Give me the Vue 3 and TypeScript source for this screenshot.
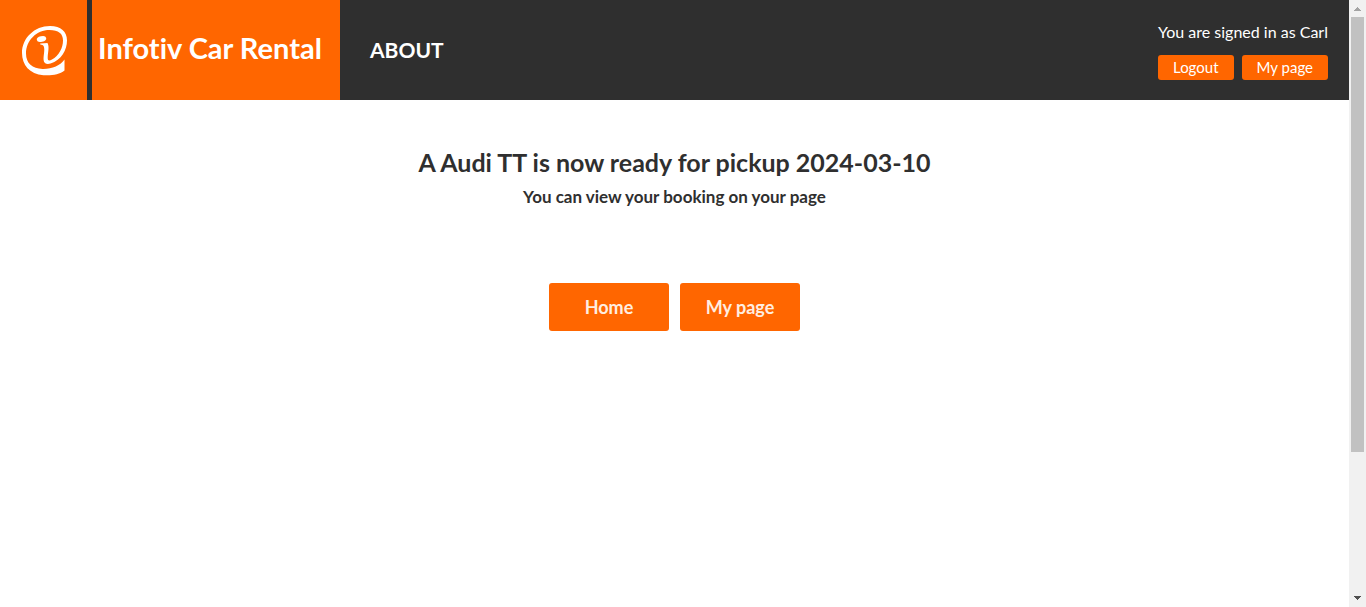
<script setup lang="ts">
import { ref } from 'vue'

const user = ref('Carl')
const car = ref('Audi TT')
const pickupDate = ref('2024-03-10')
</script>

<template>
  <div class="window">
    <div class="page">
      <header class="header">
        <a class="logo" href="#" aria-label="Infotiv home">
          <svg viewBox="-1.5 -1 48 52" width="48" height="52" aria-hidden="true">
            <path
              fill="#fff"
              fill-rule="evenodd"
              d="M43 34.500V45.500C38 49.500 30 50.800 22 50.200C8 49 .5 40 .5 28C.5 13 13 1 28.500 1C39.500 1 45.500 6.500 45.500 15.500C45.500 25 40 35 29 38.500C25.500 39.600 22.300 38.600 22.100 35C21.900 30 23.600 25 22.300 21.500C21.600 19.700 20.500 19.600 18.800 19.400L18.700 18.600L26 18C28 21.500 26.500 27 26.200 32C26 36 27.500 36.300 30.500 34.500C37.500 31 41.500 22.500 41.500 15.500C41.500 8.500 37 5 28 5C15 5 4.500 15.500 4.500 28.500C4.500 38.500 11 43.500 21 44C30 44.300 39 40.500 43 34.500Z"
            />
            <ellipse cx="20" cy="14" rx="4.800" ry="2.800" fill="#fff" transform="rotate(-12 20 14)" />
          </svg>
        </a>
        <div class="brand"><h1 class="title">Infotiv Car Rental</h1></div>
        <nav class="nav"><a class="about" href="#about">ABOUT</a></nav>
        <div class="account">
          <span class="signed-in">You are signed in as {{ user }}</span>
          <div class="account-buttons">
            <button class="small-button" type="button">Logout</button>
            <button class="small-button" type="button">My page</button>
          </div>
        </div>
      </header>
      <main class="main">
        <h2 class="confirm">A {{ car }} is now ready for pickup {{ pickupDate }}</h2>
        <p class="note">You can view your booking on your page</p>
        <div class="actions">
          <button class="large-button" type="button">Home</button>
          <button class="large-button" type="button">My page</button>
        </div>
      </main>
    </div>
    <div class="scrollbar" aria-hidden="true">
      <svg class="arrow" viewBox="0 0 17 17"><path d="M5 11h7v-1h-1v-1h-1v-1h-1v-1h-1v1h-1v1h-1v1h-1z" fill="#a3a3a3" /></svg>
      <div class="track"><div class="thumb"></div></div>
      <svg class="arrow" viewBox="0 0 17 17"><path d="M5 6h7v1h-1v1h-1v1h-1v1h-1v-1h-1v-1h-1v-1h-1z" fill="#505050" /></svg>
    </div>
  </div>
</template>

<style>
body {
  margin: 0;
  background: #fff;
}
</style>

<style scoped>
.window {
  display: flex;
  min-height: 100vh;
  font-family: "Trebuchet MS", Lato, sans-serif;
  font-variant-ligatures: none;
  color: #2f2f2f;
}
.page {
  flex: 1;
}
.header {
  display: flex;
  height: 100px;
  background: #2f2f2f;
  color: #fff;
}
.logo {
  display: flex;
  align-items: center;
  justify-content: center;
  width: 87px;
  margin-right: 5px;
  background: #ff6600;
}
.brand {
  display: flex;
  align-items: center;
  box-sizing: border-box;
  width: 248px;
  padding: 0 0 4px 6px;
  background: #ff6600;
}
.title {
  margin: 0;
  font-size: 29px;
  line-height: 32px;
  font-weight: 700;
  white-space: nowrap;
}
.nav {
  display: flex;
  align-items: center;
  padding-left: 30px;
}
.about {
  font-size: 21px;
  line-height: 28px;
  font-weight: 700;
  color: #fff;
  text-decoration: none;
}
.account {
  display: flex;
  flex-direction: column;
  align-items: center;
  gap: 13px;
  margin-left: auto;
  padding: 22px 21px 0 0;
}
.signed-in {
  font-size: 16px;
  line-height: 20px;
}
.account-buttons {
  display: flex;
  gap: 8px;
}
button {
  border: 0;
  border-radius: 3px;
  background: #ff6600;
  font-family: inherit;
  cursor: pointer;
}
.small-button {
  height: 25px;
  padding: 0 15px 2px;
  font-size: 15px;
  line-height: 20px;
  color: #fff;
}
.main {
  display: flex;
  flex-direction: column;
  align-items: center;
  padding-top: 48px;
}
.confirm {
  margin: 0;
  font-size: 25px;
  line-height: 28px;
  font-weight: 700;
}
.note {
  margin: 11px 0 0;
  font-size: 17px;
  line-height: 20px;
  font-weight: 700;
}
.actions {
  display: flex;
  gap: 11px;
  margin-top: 76px;
}
.large-button {
  width: 120px;
  height: 48px;
  font-size: 18px;
  line-height: 24px;
  font-weight: 700;
  color: #ffeee0;
}
.scrollbar {
  display: flex;
  flex-direction: column;
  width: 17px;
  background: #f1f1f1;
}
.arrow {
  width: 17px;
  height: 17px;
}
.track {
  flex: 1;
  padding: 0 2px;
}
.thumb {
  height: 76%;
  background: #c1c1c1;
}
</style>
